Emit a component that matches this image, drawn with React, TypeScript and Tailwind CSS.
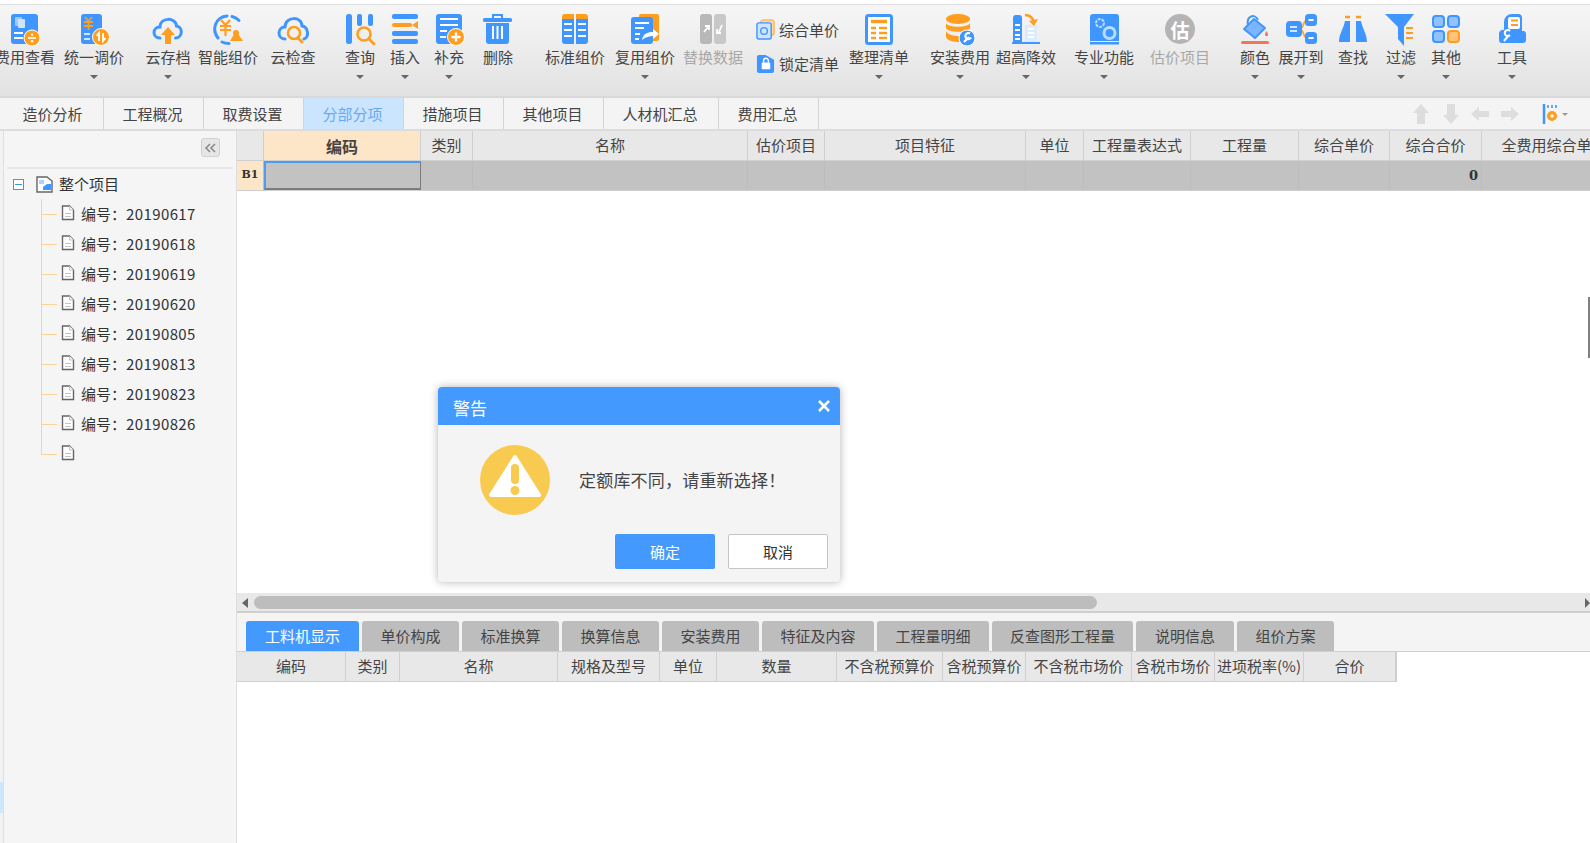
import type { ReactNode } from "react";

const B = "#4096ff";
const O = "#ff9d1e";
const G = "#b8b8b8";

function Ic({ children }: { children: ReactNode }) {
  return (
    <svg viewBox="0 0 32 32" className="h-[32px] w-[32px] shrink-0" fill="none">
      {children}
    </svg>
  );
}

const icons: Record<string, ReactNode> = {
  fee: (
    <Ic>
      <rect x="2" y="0" width="27" height="30" rx="3" fill={B} />
      <rect x="6" y="3" width="7" height="9" rx="1" fill="#9ccaff" />
      <rect x="9" y="5" width="7" height="9" rx="1" fill="#cfe5ff" />
      <path d="M5 19h9M5 24h9" stroke="#fff" strokeWidth="2" />
      <circle cx="23" cy="24" r="8" fill={O} stroke="#fff" />
      <path d="M19 24h8" stroke="#fff" strokeWidth="1.6" />
      <circle cx="23" cy="20.8" r="1.2" fill="#fff" />
      <circle cx="23" cy="27.2" r="1.2" fill="#fff" />
    </Ic>
  ),
  unify: (
    <Ic>
      <rect x="3" y="0" width="21" height="30" rx="3" fill={B} />
      <path d="M7 3l3.5 4L14 3M6 8h9M6 12h9M10.500 7v9" stroke={O} strokeWidth="1.800" />
      <path d="M6 20h6M6 25h6" stroke="#cfe5ff" strokeWidth="2" />
      <circle cx="23" cy="23" r="8.500" fill={O} stroke="#fff" />
      <path d="M21 27v-8l-2.500 3M25 19v8l2.500-3" stroke="#fff" strokeWidth="1.800" />
    </Ic>
  ),
  cloudUp: (
    <Ic>
      <path
        d="M8 24c-8 0-8-11 0-11C8 3 24 3 24.500 12c7 1 6 12-1 12"
        stroke={B}
        strokeWidth="3"
        strokeLinecap="round"
      />
      <path d="M16 13l7 8h-4v9h-6v-9H9z" fill={O} />
    </Ic>
  ),
  smart: (
    <Ic>
      <path d="M6 24C-1 15 4 3 15 2" stroke={B} strokeWidth="3" strokeLinecap="round" />
      <path d="M20 2.500c3 .6 5 2 7 4M10 28c2 1 4 1.500 7 1.500" stroke={B} strokeWidth="3" strokeLinecap="round" />
      <path d="M9 6l4.500 5L18 6M8 12h11M8 16h11M13.500 11v11" stroke={O} strokeWidth="2.200" />
      <path d="M24 17l7 10H18z" fill={O} />
      <circle cx="24" cy="19" r="3" fill={O} />
    </Ic>
  ),
  cloudSearch: (
    <Ic>
      <path
        d="M8 25c-8 0-8-12 0-12C8 2 25 2 25 12c7 1 7 12 2 13"
        stroke={B}
        strokeWidth="3"
        strokeLinecap="round"
      />
      <circle cx="17" cy="19" r="6" stroke={O} strokeWidth="2.500" />
      <path d="M21 24l4 4" stroke={O} strokeWidth="2.800" strokeLinecap="round" />
    </Ic>
  ),
  query: (
    <Ic>
      <rect x="2" y="0" width="6" height="30" rx="2.500" fill={B} />
      <rect x="13" y="0" width="5" height="12" rx="2" fill={B} />
      <rect x="24" y="0" width="5" height="12" rx="2" fill={B} />
      <circle cx="20" cy="20" r="6.500" stroke={O} strokeWidth="2.600" />
      <path d="M25 25l5 5" stroke={O} strokeWidth="2.800" strokeLinecap="round" />
    </Ic>
  ),
  insert: (
    <Ic>
      <rect x="3" y="0" width="26" height="5" rx="2" fill={B} />
      <rect x="3" y="9" width="20" height="4" rx="2" fill={O} />
      <path d="M29 7v8l-6-4z" fill={O} />
      <rect x="3" y="17" width="26" height="5" rx="2" fill={B} />
      <rect x="3" y="25" width="26" height="5" rx="2" fill={B} />
    </Ic>
  ),
  supplement: (
    <Ic>
      <rect x="3" y="0" width="26" height="30" rx="3" fill={B} />
      <path d="M7 5h18M7 11h18M7 17h7M7 23h6" stroke="#fff" strokeWidth="2" />
      <circle cx="23" cy="23" r="8.500" fill={O} stroke="#fff" />
      <path d="M23 18.500v9M18.500 23h9" stroke="#fff" strokeWidth="2.400" />
    </Ic>
  ),
  del: (
    <Ic>
      <rect x="1" y="4" width="29" height="4" rx="1.500" fill={B} />
      <path d="M11 4V1h9v3" stroke={B} strokeWidth="2" />
      <path d="M4 9h23v18a3 3 0 0 1-3 3H7a3 3 0 0 1-3-3z" fill={B} />
      <path d="M11 12v13M15.500 12v13M20 12v13" stroke="#fff" strokeWidth="2" />
    </Ic>
  ),
  stdGroup: (
    <Ic>
      <path d="M3 3a3 3 0 0 1 3-3h9v5H3zM17 0h9a3 3 0 0 1 3 3v2H17z" fill={O} />
      <path d="M3 5h12v25H6a3 3 0 0 1-3-3zM17 5h12v22a3 3 0 0 1-3 3h-9z" fill={B} />
      <path d="M5 10h8M5 16h8M5 22h8M19 10h8M19 16h8M19 22h8" stroke="#fff" strokeWidth="2" />
    </Ic>
  ),
  reuse: (
    <Ic>
      <rect x="10" y="0" width="20" height="27" rx="2" fill={O} />
      <rect x="2" y="3" width="22" height="27" rx="3" fill={B} />
      <path d="M6 9h14M6 14h9M6 20h5M6 25h4" stroke="#fff" strokeWidth="2" />
      <path d="M13 26c1-6 5-8 11-8v-3l6 5-6 5v-3c-4 0-7 1-11 4z" fill="#fff" />
    </Ic>
  ),
  replace: (
    <Ic>
      <rect x="3" y="0" width="12" height="30" rx="3" fill={G} />
      <rect x="17" y="0" width="12" height="30" rx="3" fill="#c8c8c8" />
      <path d="M7 18l4-5M8 12h4v4M25 11l-3 7M20 15v4h4" stroke="#fff" strokeWidth="1.800" />
    </Ic>
  ),
  organize: (
    <Ic>
      <rect x="3.500" y="1.500" width="25" height="28" rx="2" fill="#fff" stroke={B} strokeWidth="3" />
      <path d="M8 7.500h16" stroke={O} strokeWidth="3.500" />
      <path d="M8 14h5M16 14h8M8 19h5M16 19h8M8 24h5M16 24h8" stroke={O} strokeWidth="2.400" />
    </Ic>
  ),
  install: (
    <Ic>
      <ellipse cx="14" cy="5" rx="12" ry="5" fill={O} />
      <path d="M2 9c2 5 22 5 24 0v5c-2 5-22 5-24 0z" fill={O} />
      <path d="M2 17c2 5 12 5 14 5v6C10 28 3 27 2 23z" fill={O} />
      <circle cx="23" cy="24" r="8" fill={B} stroke="#fff" />
      <path d="M20 28l5-5M26 19.500a3 3 0 1 0 1 4" stroke="#fff" strokeWidth="2.200" />
    </Ic>
  ),
  height: (
    <Ic>
      <path d="M3 4a3 3 0 0 1 3-3h3a3 3 0 0 1 3 3v24H3z" fill={B} />
      <path d="M5 11h5M5 16h5M5 21h5M5 25h5" stroke="#fff" strokeWidth="1.800" />
      <rect x="15" y="11" width="12" height="17" fill="#dcecff" />
      <path d="M18 15h6M18 19h6M18 23h6" stroke="#fff" strokeWidth="1.800" />
      <rect x="2" y="28" width="28" height="2" fill={B} />
      <path d="M15 1c5 0 8 3 9 8" stroke={O} strokeWidth="2.500" />
      <path d="M19 7l5 5 4-7z" fill={O} />
    </Ic>
  ),
  pro: (
    <Ic>
      <path d="M2 3a3 3 0 0 1 3-3h23a3 3 0 0 1 3 3v24H2z" fill={B} />
      <rect x="2" y="28" width="29" height="2.500" fill={B} />
      <circle cx="12" cy="9" r="4" stroke="#bcdcff" strokeWidth="2" strokeDasharray="3 1" />
      <circle cx="21.500" cy="19" r="5.500" stroke="#bcdcff" strokeWidth="3" />
    </Ic>
  ),
  color: (
    <Ic>
      <path d="M15 5l11 9-10 10L5 15z" fill="#7ab6ff" stroke={B} strokeWidth="2" strokeLinejoin="round" />
      <path d="M9 11C7 2 16 -1 19 6" stroke={B} strokeWidth="2" />
      <path d="M27.500 17c2 3 2 5 0 5s-2-2 0-5z" fill="#f0755a" />
      <rect x="2" y="27" width="28" height="3" rx="1.500" fill="#f0755a" />
    </Ic>
  ),
  expand: (
    <Ic>
      <path d="M16 14c3 0 2-8 6-8M16 16c3 0 2 8 6 8" stroke={O} strokeWidth="1.500" />
      <rect x="1" y="7" width="16" height="16" rx="4" fill={B} />
      <path d="M5 13h7M5 17h7" stroke="#fff" strokeWidth="1.600" />
      <rect x="20" y="0" width="12" height="12" rx="3.500" fill={B} />
      <rect x="20" y="18" width="12" height="12" rx="3.500" fill={B} />
      <path d="M23.500 6h5M23.500 24h5" stroke="#fff" strokeWidth="2" />
    </Ic>
  ),
  find: (
    <Ic>
      <path d="M8 7h5v21H2c0-8 4-12 6-21zM19 7h5c2 9 6 13 6 21H19z" fill={B} />
      <path d="M8 3h5M19 3h5" stroke={O} strokeWidth="2.500" />
    </Ic>
  ),
  filter: (
    <Ic>
      <path d="M0 0h29L19 13v19l-6-7V13z" fill={B} />
      <path d="M21 14h7M21 19h7M21 24h7" stroke={O} strokeWidth="2" />
    </Ic>
  ),
  other: (
    <Ic>
      <rect x="3" y="2" width="11" height="11" rx="3" fill="#8fc2ff" stroke={B} strokeWidth="2" />
      <rect x="18" y="2" width="11" height="11" rx="3" fill="#8fc2ff" stroke={B} strokeWidth="2" />
      <rect x="3" y="17" width="11" height="11" rx="3" fill="#8fc2ff" stroke={B} strokeWidth="2" />
      <rect x="18" y="17" width="11" height="11" rx="3" fill="#ffc47a" stroke={O} strokeWidth="2" />
    </Ic>
  ),
  tool: (
    <Ic>
      <path d="M8 8a8 8 0 0 1 8-8h6a4 4 0 0 1 4 4v13h2a3 3 0 0 1 2 3v6a3 3 0 0 1-3 3H6a3 3 0 0 1-3-3v-7a4 4 0 0 1 5-3z" fill={B} />
      <rect x="12" y="3" width="12" height="12" rx="2" fill="#fff" />
      <path d="M15 6.500h7M15 11h7" stroke={O} strokeWidth="2.200" />
      <path d="M8 27l5-6M14 17a3 3 0 1 0 0 4" stroke="#fff" strokeWidth="2" />
    </Ic>
  ),
};

type Tool = { label: string; icon?: string; box: string; arrow?: boolean; off?: boolean };

const tools: Tool[] = [
  { label: "费用查看", icon: "fee", box: "w-[60px] -ml-[5px]" },
  { label: "统一调价", icon: "unify", box: "w-[60px] ml-[9px]", arrow: true },
  { label: "云存档", icon: "cloudUp", box: "w-[46px] ml-[21px]", arrow: true },
  { label: "智能组价", icon: "smart", box: "w-[60px] ml-[7px]" },
  { label: "云检查", icon: "cloudSearch", box: "w-[46px] ml-[12px]" },
  { label: "查询", icon: "query", box: "w-[30px] ml-[29px]", arrow: true },
  { label: "插入", icon: "insert", box: "w-[30px] ml-[15px]", arrow: true },
  { label: "补充", icon: "supplement", box: "w-[30px] ml-[14px]", arrow: true },
  { label: "删除", icon: "del", box: "w-[30px] ml-[19px]" },
  { label: "标准组价", icon: "stdGroup", box: "w-[60px] ml-[32px]" },
  { label: "复用组价", icon: "reuse", box: "w-[60px] ml-[10px]", arrow: true },
  { label: "替换数据", icon: "replace", box: "w-[60px] ml-[8px]", off: true },
];

const tools2: Tool[] = [
  { label: "整理清单", icon: "organize", box: "w-[60px] ml-[9px]", arrow: true },
  { label: "安装费用", icon: "install", box: "w-[60px] ml-[21px]", arrow: true },
  { label: "超高降效", icon: "height", box: "w-[60px] ml-[6px]", arrow: true },
  { label: "专业功能", icon: "pro", box: "w-[60px] ml-[18px]", arrow: true },
  { label: "估价项目", box: "w-[60px] ml-[16px]", off: true },
  { label: "颜色", icon: "color", box: "w-[30px] ml-[30px]", arrow: true },
  { label: "展开到", icon: "expand", box: "w-[46px] ml-[8px]", arrow: true },
  { label: "查找", icon: "find", box: "w-[30px] ml-[14px]" },
  { label: "过滤", icon: "filter", box: "w-[30px] ml-[18px]", arrow: true },
  { label: "其他", icon: "other", box: "w-[30px] ml-[15px]", arrow: true },
  { label: "工具", icon: "tool", box: "w-[30px] ml-[36px]", arrow: true },
];

function ToolBtn({ t }: { t: Tool }) {
  return (
    <div className={`flex shrink-0 flex-col items-center ${t.box}`}>
      <div className="flex h-[32px] items-start justify-center">
        {t.icon ? (
          icons[t.icon]
        ) : (
          <div className="flex h-[30px] w-[30px] items-center justify-center rounded-full bg-[#b4b4b4] text-[19px] font-bold leading-none text-white">
            估
          </div>
        )}
      </div>
      <div className={`mt-[1px] h-[20px] whitespace-nowrap text-[15px] leading-[20px] ${t.off ? "text-[#a8a8a8]" : "text-[#444]"}`}>
        {t.label}
      </div>
      {t.arrow && <div className="mt-[8px] h-0 w-0 border-x-[4px] border-t-[4px] border-x-transparent border-t-[#666]" />}
    </div>
  );
}

function Toolbar() {
  return (
    <div className="flex h-[93px] shrink-0 items-start border-b-2 border-[#d9d9d9] bg-gradient-to-b from-[#f6f6f6] to-[#e2e2e2] pt-[9px]">
      {tools.map((t) => (
        <ToolBtn key={t.label} t={t} />
      ))}
      <div className="ml-[13px] flex w-[84px] shrink-0 flex-col gap-[13px] pt-[5px] text-[15px] leading-[20px] text-[#444]">
        <div className="flex items-center gap-[4px] whitespace-nowrap">
          <svg viewBox="0 0 20 22" className="h-[21px] w-[19px] shrink-0" fill="none">
            <rect x="5" y="1" width="14" height="16" rx="2" fill="#ffd9a8" stroke={O} />
            <rect x="1" y="4" width="15" height="17" rx="2" fill="#cfe5ff" stroke={B} strokeWidth="1.500" />
            <circle cx="8.500" cy="12.500" r="3.500" stroke={B} strokeWidth="1.500" />
          </svg>
          综合单价
        </div>
        <div className="flex items-center gap-[4px] whitespace-nowrap">
          <svg viewBox="0 0 20 22" className="h-[21px] w-[19px] shrink-0" fill="none">
            <path d="M1 4a2 2 0 0 1 2-2h7l9 5v12a2 2 0 0 1-2 2H3a2 2 0 0 1-2-2z" fill={B} />
            <rect x="6" y="10" width="9" height="7" rx="1" fill="#fff" />
            <path d="M8 10V8a2.500 2.500 0 0 1 5 0v2" stroke="#fff" strokeWidth="1.500" />
          </svg>
          锁定清单
        </div>
      </div>
      {tools2.map((t) => (
        <ToolBtn key={t.label} t={t} />
      ))}
    </div>
  );
}

const topTabs = [
  { label: "造价分析", w: "w-[100px]" },
  { label: "工程概况", w: "w-[100px]" },
  { label: "取费设置", w: "w-[100px]" },
  { label: "分部分项", w: "w-[100px]", active: true },
  { label: "措施项目", w: "w-[100px]" },
  { label: "其他项目", w: "w-[100px]" },
  { label: "人材机汇总", w: "w-[115px]" },
  { label: "费用汇总", w: "w-[100px]" },
];

function TabRow() {
  return (
    <div className="flex h-[33px] shrink-0 items-stretch border-b-2 border-[#dcdcdc] bg-[#f4f4f4] pl-[4px]">
      {topTabs.map((t) => (
        <div
          key={t.label}
          className={`flex items-center justify-center border-r border-[#d4d4d4] pr-[2px] pt-[1px] text-[15px] ${t.w} ${
            t.active ? "bg-[#cce5ff] text-[#66a9f7]" : "text-[#444]"
          }`}
        >
          {t.label}
        </div>
      ))}
      <div className="ml-auto flex items-center pr-[21px]">
        <svg viewBox="0 0 108 22" className="h-[22px] w-[108px]" fill="#dddddd">
          <path d="M9 1l8 9h-4v11H5V10H1z" />
          <path d="M39 21l-8-9h4V1h8v11h4z" />
          <path d="M59 11l8-7v4h10v6H67v4z" />
          <path d="M107 11l-8-7v4H89v6h10v4z" />
        </svg>
        <svg viewBox="0 0 28 22" className="ml-[21px] h-[22px] w-[28px]" fill="none">
          <path d="M3 1v20" stroke={B} strokeWidth="2.500" />
          <path d="M7 2v3M11 2v3M15 2v3" stroke={B} strokeWidth="1.600" />
          <circle cx="11" cy="13" r="5" fill={O} />
          <circle cx="11" cy="13" r="1.800" fill="#fff" />
          <path d="M21 10h6l-3 3z" fill="#999" />
        </svg>
      </div>
    </div>
  );
}

function TreeFile({ label }: { label?: string }) {
  return (
    <div className="flex h-[30px] items-center">
      <div className="h-px w-[16px] bg-[#fdd29b]" />
      <svg viewBox="0 0 14 16" className="ml-[4px] h-[16px] w-[14px] shrink-0 -translate-y-[1px]" fill="#fff" stroke="#666" strokeWidth="1.400">
        <path d="M1.500 1h7l4 4v9.500h-11z" />
        <path d="M8.500 1v4h4M4 8.500h6M4 11.500h6" stroke="#aaa" strokeWidth=".7" />
      </svg>
      {label && (
        <span className="ml-[6px] whitespace-nowrap text-[15px] text-[#333]">
          {"编号\uFF1A"}
          <span className="tracking-[0.4px]">{label}</span>
        </span>
      )}
    </div>
  );
}

const codes = ["20190617", "20190618", "20190619", "20190620", "20190805", "20190813", "20190823", "20190826"];

function Sidebar() {
  return (
    <div className="flex w-[237px] shrink-0">
      <div className="flex w-[4px] flex-col border-r border-[#dedede] bg-[#f2f2f2] pt-[651px]">
        <div className="h-[31px] bg-[#cfe6ff]" />
      </div>
      <div className="flex flex-1 flex-col border-r border-[#dedede] bg-[#f5f5f5]">
        <div className="mx-[3px] flex h-[38px] shrink-0 items-center justify-end border-b-2 border-[#e8e8e8] pb-[3px] pr-[13px]">
          <div className="flex h-[19px] w-[19px] items-center justify-center rounded-[3px] border border-[#d0d0d0] bg-[#e6e6e6]">
            <svg viewBox="0 0 13 10" className="h-[10px] w-[13px]" fill="none" stroke="#888" strokeWidth="1.500">
              <path d="M6 1L2 5l4 4M11 1L7 5l4 4" />
            </svg>
          </div>
        </div>
        <div className="flex h-[30px] shrink-0 items-center pl-[9px]">
          <div className="flex h-[11px] w-[11px] items-center justify-center border border-[#888] bg-white">
            <div className="h-px w-[7px] bg-[#3a9ad9]" />
          </div>
          <svg viewBox="0 0 17 17" className="ml-[12px] h-[17px] w-[17px]" fill="none">
            <path d="M1 1h10l5 4v11H1z" fill="#fff" stroke="#666" strokeWidth="1.400" />
            <path d="M3 4h5v4H3z" fill="#a9d2ff" />
            <path d="M7 14v-3l4-3h4v6z" fill={B} />
          </svg>
          <span className="ml-[6px] text-[15px] text-[#333]">整个项目</span>
        </div>
        <div className="relative ml-[37px]">
          <div className="absolute bottom-[15px] left-0 top-0 w-px bg-[#fdd29b]" />
          {codes.map((c) => (
            <TreeFile key={c} label={c} />
          ))}
          <TreeFile />
        </div>
      </div>
    </div>
  );
}

const mainCols = [
  { label: "", w: "w-[27px]" },
  { label: "编码", w: "w-[157px]" },
  { label: "类别", w: "w-[52px]" },
  { label: "名称", w: "w-[275px]" },
  { label: "估价项目", w: "w-[77px]" },
  { label: "项目特征", w: "w-[201px]" },
  { label: "单位", w: "w-[58px]" },
  { label: "工程量表达式", w: "w-[107px]" },
  { label: "工程量", w: "w-[108px]" },
  { label: "综合单价", w: "w-[91px]" },
  { label: "综合合价", w: "w-[92px]" },
  { label: "全费用综合单价", w: "w-[145px]" },
];

function MainTable() {
  return (
    <div className="flex h-[462px] shrink-0 flex-col overflow-hidden">
      <div className="flex h-[29px] shrink-0">
        {mainCols.map((c, i) => (
          <div
            key={i}
            className={`flex shrink-0 items-center justify-center whitespace-nowrap border-r border-[#cfcfcf] text-[15px] text-[#444] ${c.w} ${
              i === 1 ? "bg-[#fde5c8] text-[16px] font-bold text-[#222]" : "bg-[#e8e8e8]"
            }`}
          >
            {c.label}
          </div>
        ))}
      </div>
      <div className="flex h-[31px] shrink-0 border-y border-[#cfcfcf] bg-[#c2c2c2]">
        {mainCols.map((c, i) => (
          <div
            key={i}
            className={`flex shrink-0 items-center border-r border-[#bcbcbc] ${c.w} ${
              i === 0 ? "justify-center bg-[#fde5c8]" : "justify-end"
            } ${i === 1 ? "border-2 border-b-[#7c7c7c] border-l-[#4a9cf5] border-r-[#7c7c7c] border-t-[#4a9cf5]" : ""}`}
          >
            {i === 0 && <span className="font-['DejaVu_Serif',serif] text-[11px] font-bold text-[#333]">B1</span>}
            {i === 10 && <span className="pr-[3px] font-['DejaVu_Serif',serif] text-[13px] font-bold text-[#333]">0</span>}
          </div>
        ))}
      </div>
    </div>
  );
}

function HScroll() {
  return (
    <div className="flex h-[20px] shrink-0 items-start border-b-2 border-[#cfcfcf] bg-[#e8e8e8] pt-[3px]">
      <div className="ml-[5px] mt-[2px] h-0 w-0 border-y-[5px] border-r-[6px] border-y-transparent border-r-[#666]" />
      <div className="ml-[6px] h-[13px] w-[843px] rounded-full bg-[#bdbdbd]" />
      <div className="ml-auto mr-0 mt-[2px] h-0 w-0 border-y-[5px] border-l-[5px] border-y-transparent border-l-[#666]" />
    </div>
  );
}

const bottomTabs = [
  { label: "工料机显示", w: "w-[113px]", active: true },
  { label: "单价构成", w: "w-[97px]" },
  { label: "标准换算", w: "w-[97px]" },
  { label: "换算信息", w: "w-[97px]" },
  { label: "安装费用", w: "w-[97px]" },
  { label: "特征及内容", w: "w-[112px]" },
  { label: "工程量明细", w: "w-[112px]" },
  { label: "反查图形工程量", w: "w-[141px]" },
  { label: "说明信息", w: "w-[98px]" },
  { label: "组价方案", w: "w-[97px]" },
];

const bottomCols = [
  { label: "编码", w: "w-[109px]" },
  { label: "类别", w: "w-[54px]" },
  { label: "名称", w: "w-[158px]" },
  { label: "规格及型号", w: "w-[102px]" },
  { label: "单位", w: "w-[57px]" },
  { label: "数量", w: "w-[120px]" },
  { label: "不含税预算价", w: "w-[106px]" },
  { label: "含税预算价", w: "w-[83px]" },
  { label: "不含税市场价", w: "w-[106px]" },
  { label: "含税市场价", w: "w-[83px]" },
  { label: "进项税率(%)", w: "w-[89px]" },
  { label: "合价", w: "w-[92px]" },
];

function BottomPanel() {
  return (
    <div className="flex flex-1 flex-col bg-white">
      <div className="flex h-[39px] shrink-0 items-end gap-[3px] border-b border-[#cfcfcf] bg-[#f4f4f4] pl-[9px]">
        {bottomTabs.map((t) => (
          <div
            key={t.label}
            className={`flex h-[30px] shrink-0 items-center justify-center rounded-t-[3px] text-[15px] ${t.w} ${
              t.active ? "bg-[#4499ff] text-white" : "bg-[#bdbdbd] text-[#444]"
            }`}
          >
            {t.label}
          </div>
        ))}
      </div>
      <div className="flex h-[30px] w-fit shrink-0 border-b border-r border-[#cfcfcf] bg-[#e8e8e8]">
        {bottomCols.map((c) => (
          <div
            key={c.label}
            className={`flex shrink-0 items-center justify-center whitespace-nowrap border-r border-[#cfcfcf] text-[15px] text-[#444] ${c.w}`}
          >
            {c.label}
          </div>
        ))}
      </div>
    </div>
  );
}

function WarningDialog() {
  return (
    <div className="absolute left-[438px] top-[387px] flex h-[195px] w-[402px] flex-col overflow-hidden rounded-[4px] bg-[#f4f4f4] shadow-[0_0_8px_rgba(0,0,0,0.3)]">
      <div className="flex h-[38px] shrink-0 items-center justify-between bg-[#4499ff] pl-[15px] pr-[10px] text-[17px] text-white">
        <span className="translate-y-[2px]">警告</span>
        <svg viewBox="0 0 12 12" className="h-[12px] w-[12px]" stroke="#fff" strokeWidth="2.600">
          <path d="M1 1l10 10M11 1L1 11" />
        </svg>
      </div>
      <div className="flex h-[106px] items-center pl-[42px] pt-[4px]">
        <svg viewBox="0 0 70 70" className="h-[70px] w-[70px] shrink-0">
          <circle cx="35" cy="35" r="35" fill="#f8ca50" />
          <path d="M35 12L59 50H11z" fill="#fff" stroke="#fff" strokeWidth="4" strokeLinejoin="round" />
          <rect x="31" y="19" width="8" height="20" rx="4" fill="#f8ca50" />
          <circle cx="35" cy="45.500" r="4.500" fill="#f8ca50" />
        </svg>
        <div className="ml-[29px] whitespace-nowrap text-[17px] tracking-[0.2px] text-[#444]">
          {"定额库不同\uFF0C请重新选择\uFF01"}
        </div>
      </div>
      <div className="flex justify-end gap-[13px] pr-[12px] pt-[3px]">
        <div className="flex h-[35px] w-[100px] items-center justify-center rounded-[2px] bg-[#4499ff] pt-[2px] text-[15px] text-white">确定</div>
        <div className="flex h-[35px] w-[100px] items-center justify-center rounded-[2px] border border-[#c4c4c4] bg-white pt-[2px] text-[15px] text-[#333]">取消</div>
      </div>
    </div>
  );
}

export default function App() {
  return (
    <div className="relative flex h-[843px] w-[1590px] flex-col overflow-hidden bg-white font-['Noto_Sans_CJK_SC','Noto_Sans',sans-serif]">
      <div className="h-[5px] shrink-0 border-b border-[#dddddd] bg-white" />
      <Toolbar />
      <TabRow />
      <div className="flex min-h-0 flex-1">
        <Sidebar />
        <div className="flex min-w-0 flex-1 flex-col">
          <MainTable />
          <HScroll />
          <BottomPanel />
        </div>
      </div>
      <WarningDialog />
      <div className="absolute right-0 top-[297px] h-[61px] w-[2px] bg-[#808080]" />
    </div>
  );
}
